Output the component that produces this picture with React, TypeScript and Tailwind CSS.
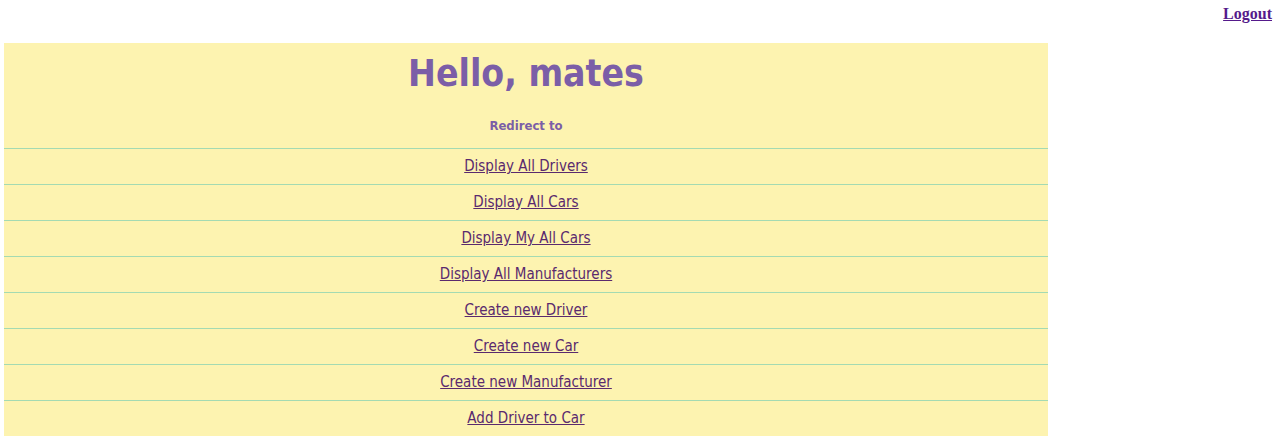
const links = [
  "Display All Drivers",
  "Display All Cars",
  "Display My All Cars",
  "Display All Manufacturers",
  "Create new Driver",
  "Create new Car",
  "Create new Manufacturer",
  "Add Driver to Car",
];

const App = () => {
  return (
    <div className="w-[1280px] h-[440px] bg-white overflow-hidden">
      <div className="flex justify-end pr-2 pt-[5px] h-[43px]">
        <a
          href="#"
          className="font-['Liberation_Serif',serif] font-bold text-base leading-[18px] text-[#551a8b] underline"
        >
          Logout
        </a>
      </div>
      <div className="ml-1 w-[1044px] bg-[#fdf3b0] font-['DejaVu_Sans_Condensed','DejaVu_Sans',sans-serif]">
        <div className="h-[105px] flex flex-col items-center">
          <h1 className="mt-[8px] text-[37px] leading-[46px] font-bold text-[#7b5ea7]">
            Hello, mates
          </h1>
          <div className="mt-[21px] text-[13px] leading-[16px] font-bold text-[#7b5ea7]">
            Redirect to
          </div>
        </div>
        {links.map((l) => (
          <div
            key={l}
            className="h-[36px] border-t border-[#a4dab2] flex items-center justify-center"
          >
            <a href="#" className="text-[15px] text-[#5a2a6e] underline">
              {l}
            </a>
          </div>
        ))}
      </div>
    </div>
  );
};

export default App;
